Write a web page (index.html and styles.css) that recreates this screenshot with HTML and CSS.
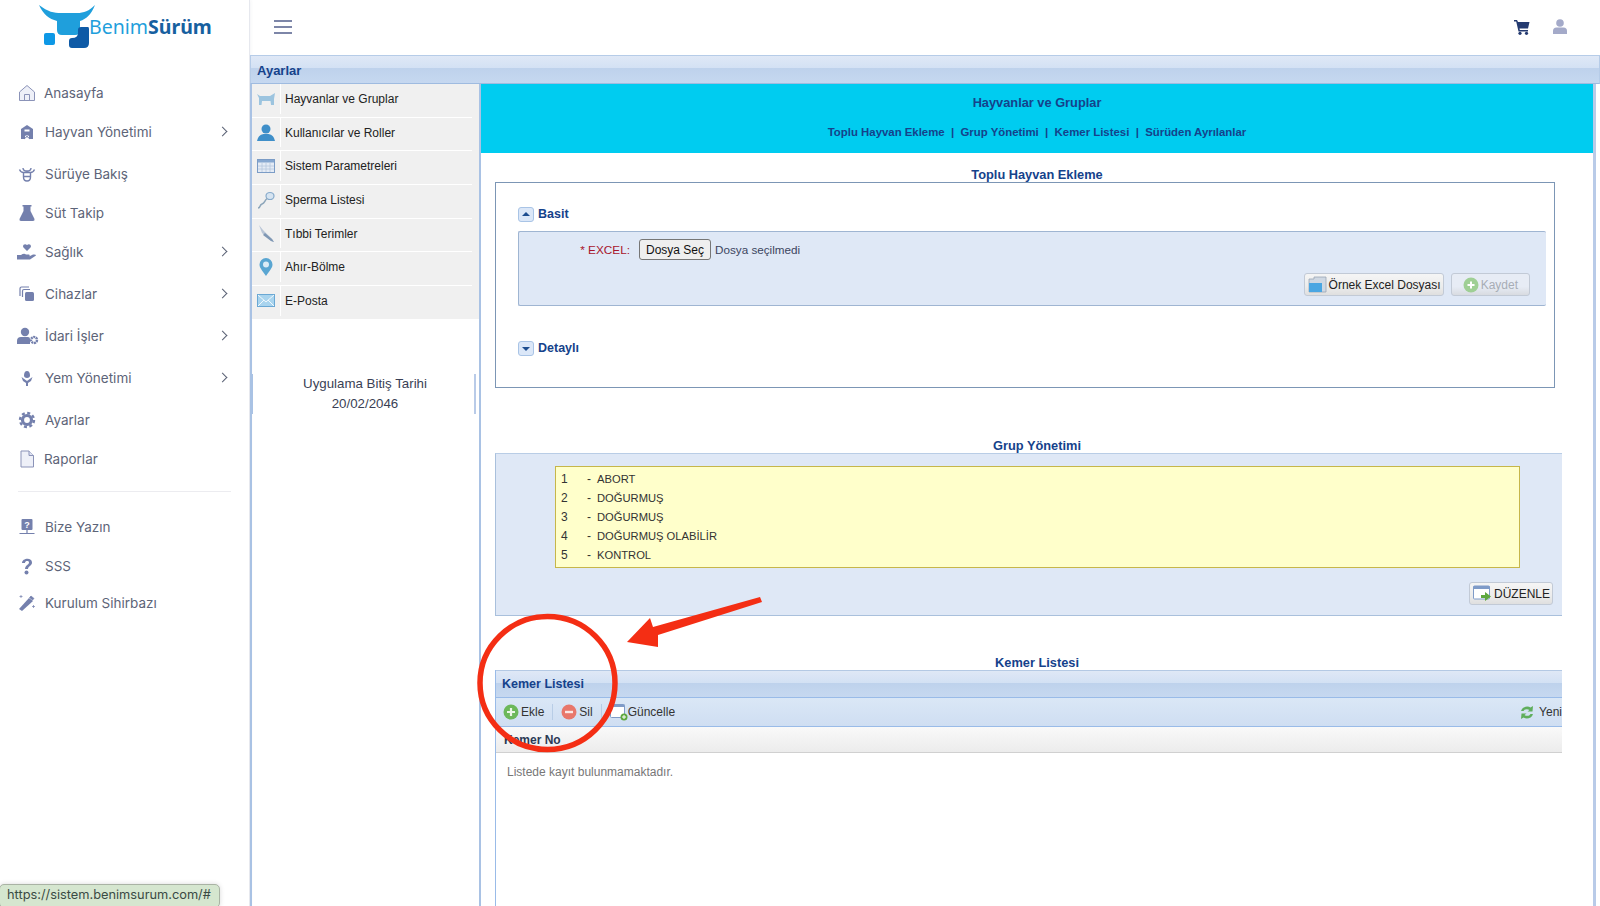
FILE: index.html
```html
<!DOCTYPE html>
<html lang="tr">
<head>
<meta charset="utf-8">
<title>BenimSürüm</title>
<link rel="stylesheet" href="styles.css">
</head>
<body>
<div class="app">
  <aside class="sidebar">
    <div class="logo">
      <svg class="logo-mark" width="60" height="50" viewBox="0 0 60 50">
        <path d="M0 5 C9 12 15 13 22 13 L38 13 C45 13 50 11 56 5 C52 15 47 19 41 21 L41 30 Q41 35 36 35 L23 35 Q18 35 18 30 L18 21 C10 19 4 14 0 5Z" fill="#1f9fdc"/>
        <rect x="5" y="33" width="11" height="12" rx="2" fill="#0d98e6"/>
        <path d="M30 41 Q30 38 33 38 Q39 38 39 33 L39 30 Q39 27 42 27 L49 27 Q50 27 50 29 L50 43 Q50 48 45 48 L33 48 Q30 48 30 45Z" fill="#0e5aa6"/>
      </svg>
      <span class="logo-text"><span class="logo-light">Benim</span><span class="logo-bold">Sürüm</span></span>
    </div>
    <nav class="nav">
      <a class="nav-item"><svg class="ic" viewBox="0 0 18 18"><path d="M1.5 8 9 1.5 16.500 8V16.500H1.500Z M6.500 16.500V10.500H11.500V16.500" fill="#eef0f8" stroke="#8b93b8" stroke-width="1"/></svg><span class="tight">Anasayfa</span></a>
      <a class="nav-item"><svg class="ic" viewBox="0 0 18 18"><path d="M3 16V6L9 2 15 6V16H11V12H7V16Z M6.500 6.500H11.500V8.500H6.500Z" fill="#7480ad" fill-rule="evenodd"/><path d="M6 16 12 11M12 16 6 11" stroke="#7480ad"/></svg><span>Hayvan Yönetimi</span><i class="chev"></i></a>
      <a class="nav-item wide"><svg class="ic" viewBox="0 0 18 18"><path d="M1.500 4.500C2.500 7 4 7.500 5.500 7.500H12.500C14 7.500 15.500 7 16.500 4.500M5 3C5 5 6 6 9 6S13 5 13 3M5.500 7.500V12C5.500 14.500 7 16 9 16S12.500 14.500 12.500 12V7.500M6 11.500H12" fill="none" stroke="#7480ad" stroke-width="1.400"/></svg><span>Sürüye Bakış</span></a>
      <a class="nav-item"><svg class="ic" viewBox="0 0 18 18"><path d="M4.500 1H13.500V2.500H12.500V7L16.500 15Q17 17 15 17H3Q1 17 1.500 15L5.500 7V2.500H4.500Z" fill="#7480ad"/></svg><span>Süt Takip</span></a>
      <a class="nav-item"><svg class="ic ic-big" viewBox="0 0 20 18"><path d="M10 8 6.500 4.500C5 2.500 7.500 0 10 2 12.500 0 15 2.500 13.500 4.500Z M0 12H4Q7 10 9 11.500H12Q13.500 12.500 12 13.500H8.500H12L16 11.500Q19 11 19 12.500L13 16.500H0Z" fill="#7480ad"/></svg><span>Sağlık</span><i class="chev"></i></a>
      <a class="nav-item wide"><svg class="ic" viewBox="0 0 18 18"><path d="M2 11V3.500Q2 2 3.500 2H11M4.500 12V6Q4.500 4.500 6 4.500H12" fill="none" stroke="#7480ad" stroke-width="1.200"/><rect x="7" y="7" width="9" height="9" rx="1.500" fill="#7480ad"/></svg><span>Cihazlar</span><i class="chev"></i></a>
      <a class="nav-item wide"><svg class="ic ic-wide" viewBox="0 0 22 18"><circle cx="8" cy="5" r="4.200" fill="#7480ad"/><path d="M0 17V14Q0 10 4 10H11Q13 10 13 12V17Z" fill="#7480ad"/><circle cx="17" cy="13" r="3" fill="none" stroke="#7480ad" stroke-width="2.400" stroke-dasharray="2 .6"/></svg><span>İdari İşler</span><i class="chev"></i></a>
      <a class="nav-item wide"><svg class="ic" viewBox="0 0 18 18"><path d="M9 2C11 2 12 4 12 6.500 12 8 11 9 9 9S6 8 6 6.500C6 4 7 2 9 2Z M3.500 8 9 12 14.500 8 13 12 10 14V17H8V14L5 12Z" fill="#7480ad"/></svg><span>Yem Yönetimi</span><i class="chev"></i></a>
      <a class="nav-item wide"><svg class="ic" viewBox="0 0 18 18"><circle cx="9" cy="9" r="4.500" fill="none" stroke="#7480ad" stroke-width="3.200"/><circle cx="9" cy="9" r="7" fill="none" stroke="#7480ad" stroke-width="2.400" stroke-dasharray="3 2.500"/></svg><span>Ayarlar</span></a>
      <a class="nav-item"><svg class="ic" viewBox="0 0 18 18"><path d="M3 1H11L15.500 5.500V17H3Z" fill="#eef0f8" stroke="#8b93b8"/><path d="M11 1V5.500H15.500" fill="#dfe3f2" stroke="#8b93b8"/></svg><span class="tight">Raporlar</span></a>
      <div class="nav-divider"></div>
      <a class="nav-item"><svg class="ic" viewBox="0 0 18 18"><rect x="3.500" y="1" width="11" height="11" rx="1" fill="#7480ad"/><text x="9" y="10" class="ic-q">?</text><path d="M9 12V15M1.500 15.500H16.500" stroke="#7480ad" stroke-width="1.200"/></svg><span>Bize Yazın</span></a>
      <a class="nav-item"><svg class="ic" viewBox="0 0 18 18"><path d="M4 6C4 1 14 0 14 5.500 14 9 10 9 10 12H7C7 8 11 8 11 5.500 11 3.500 7 3.500 7 6Z" fill="#7480ad"/><circle cx="8.500" cy="15.500" r="2" fill="#7480ad"/></svg><span>SSS</span></a>
      <a class="nav-item short"><svg class="ic" viewBox="0 0 18 18"><path d="M1 15 11 4 15 7 4 17Z" fill="#7480ad"/><path d="M13 2 16 4.500 14.500 6 11.500 3.500Z M3 1V4M1.500 2.500H4.500M15.500 11V14M14 12.500H17" fill="#7480ad" stroke="#7480ad" stroke-width=".7"/></svg><span>Kurulum Sihirbazı</span></a>
    </nav>
  </aside>

  <main class="main">
    <header class="topbar">
      <div class="burger"><b></b><b></b><b></b></div>
      <div class="top-actions">
        <svg width="16" height="16" viewBox="0 0 16 16"><path d="M0 1H3L4 3H15.500L14 9.500H5.500L5.800 11H14V12.500H4.500L2.200 2.500H0Z" fill="#243a70"/><circle cx="6" cy="14.300" r="1.600" fill="#243a70"/><circle cx="12.500" cy="14.300" r="1.600" fill="#243a70"/></svg>
        <svg width="14" height="15" viewBox="0 0 14 15"><circle cx="7" cy="4" r="3.800" fill="#a4aac9"/><path d="M0 15V12Q0 8.500 3.500 8.500H10.500Q14 8.500 14 12V15Z" fill="#a4aac9"/></svg>
      </div>
    </header>

    <div class="panel-title">Ayarlar</div>

    <div class="panel-body">
      <div class="west">
        <ul class="menu">
          <li><span class="menu-ic"><svg width="20" height="16" viewBox="0 0 20 16"><path d="M1 3 4 5H14L19 2 18 8V14H15L14.500 10H6L5.500 14H3V7Z" fill="#9cc4df"/></svg></span>Hayvanlar ve Gruplar</li>
          <li><span class="menu-ic"><svg width="20" height="18" viewBox="0 0 20 18"><circle cx="10" cy="5" r="4.500" fill="#3f8fc9"/><path d="M1 17Q2 11 7.500 10H12.500Q18 11 19 17Z" fill="#3f8fc9"/></svg></span>Kullanıcılar ve Roller</li>
          <li><span class="menu-ic"><svg width="18" height="14" viewBox="0 0 18 14"><rect x=".5" y=".5" width="17" height="13" fill="#e4ebf5" stroke="#7b9cc6"/><rect x="1" y="1" width="16" height="2.500" fill="#86a7d0"/><path d="M5 4V13M9 4V13M13 4V13M1 7H17M1 10H17" stroke="#b5c6dd" stroke-width=".8"/></svg></span>Sistem Parametreleri</li>
          <li><span class="menu-ic"><svg width="20" height="20" viewBox="0 0 20 20"><ellipse cx="14" cy="6" rx="4" ry="3.500" fill="#d6e4f1" stroke="#86aacb" stroke-width="1.200"/><path d="M11 8.500C8 11 9 13 6 14S5 18 2 18" fill="none" stroke="#8da6ba" stroke-width="1.500"/></svg></span>Sperma Listesi</li>
          <li><span class="menu-ic"><svg width="20" height="20" viewBox="0 0 20 20"><path d="M3 1 7 6 16 15 18 18 15 17 6 9Z" fill="#b9c5d6"/><path d="M9 9 16 15 18 18 15 17 7 11Z" fill="#7f97b4"/></svg></span>Tıbbi Terimler</li>
          <li><span class="menu-ic"><svg width="16" height="20" viewBox="0 0 16 20"><path d="M8 19C4 13 1.500 11 1.500 7.500A6.500 6.500 0 0 1 14.500 7.500C14.500 11 12 13 8 19Z" fill="#5aa6d2"/><circle cx="8" cy="7.500" r="3" fill="#dcecf6"/></svg></span>Ahır-Bölme</li>
          <li><span class="menu-ic"><svg width="18" height="13" viewBox="0 0 18 13"><rect x=".5" y=".5" width="17" height="12" fill="#a9d4ee" stroke="#6aa8d4"/><path d="M1 1 9 8 17 1M1 12 7 6M17 12 11 6" fill="none" stroke="#f2f9fd"/></svg></span>E-Posta</li>
        </ul>
        <div class="expiry">
          <div>Uygulama Bitiş Tarihi</div>
          <div>20/02/2046</div>
        </div>
      </div>

      <div class="center">
        <div class="hero">
          <h2>Hayvanlar ve Gruplar</h2>
          <p>Toplu Hayvan Ekleme &nbsp;|&nbsp; Grup Yönetimi &nbsp;|&nbsp; Kemer Listesi &nbsp;|&nbsp; Sürüden Ayrılanlar</p>
        </div>

        <div class="content">
          <h3 class="sec-title sec-first">Toplu Hayvan Ekleme</h3>
          <section class="box">
            <div class="acc-head"><i class="tool up"></i>Basit</div>
            <div class="form-panel">
              <div class="field">
                <label>* EXCEL:</label>
                <span class="file-btn">Dosya Seç</span>
                <span class="file-name">Dosya seçilmedi</span>
              </div>
              <div class="form-actions">
                <span class="btn"><svg width="19" height="17" viewBox="0 0 19 17"><path d="M1 3V16H18V1H6V3Z" fill="#cfd8e3" stroke="#9aa6b5" stroke-width=".8"/><path d="M1 7H14V16H1Z" fill="#4aa6e2"/></svg>Örnek Excel Dosyası</span>
                <span class="btn off"><svg width="16" height="16" viewBox="0 0 16 16"><circle cx="8" cy="8" r="7.500" fill="#9fcf95"/><path d="M8 4.500V11.500M4.500 8H11.500" stroke="#fff" stroke-width="2"/></svg>Kaydet</span>
              </div>
            </div>
            <div class="acc-head acc-second"><i class="tool down"></i>Detaylı</div>
          </section>

          <h3 class="sec-title sec-group">Grup Yönetimi</h3>
          <section class="group-panel">
            <ul class="group-list">
              <li><span>1</span><i>-</i>ABORT</li>
              <li><span>2</span><i>-</i>DOĞURMUŞ</li>
              <li><span>3</span><i>-</i>DOĞURMUŞ</li>
              <li><span>4</span><i>-</i>DOĞURMUŞ OLABİLİR</li>
              <li><span>5</span><i>-</i>KONTROL</li>
            </ul>
            <div class="group-actions">
              <span class="btn"><svg width="19" height="17" viewBox="0 0 19 17"><rect x=".5" y="1" width="16" height="13" rx="1" fill="#fff" stroke="#7f9bc8"/><rect x=".5" y="1" width="16" height="3" fill="#7f9bc8"/><path d="M8 10H12V7L18 11.500 12 16V13H8Z" fill="#5fa83f"/></svg>DÜZENLE</span>
            </div>
          </section>

          <h3 class="sec-title sec-belt">Kemer Listesi</h3>
          <section class="grid">
            <div class="grid-title">Kemer Listesi</div>
            <div class="grid-tools">
              <span class="tl"><svg width="16" height="16" viewBox="0 0 16 16"><circle cx="8" cy="8" r="7.500" fill="#6cb85a"/><path d="M8 4V12M4 8H12" stroke="#eaf6e6" stroke-width="2.200"/></svg>Ekle</span>
              <span class="tl"><svg width="16" height="16" viewBox="0 0 16 16"><circle cx="8" cy="8" r="7.500" fill="#e8776b"/><path d="M4 8H12" stroke="#fbe8e6" stroke-width="2.400"/></svg>Sil</span>
              <span class="tl plain"><svg width="18" height="17" viewBox="0 0 18 17"><rect x=".5" y=".5" width="14" height="13" rx="1" fill="#fff" stroke="#7f9bc8"/><rect x=".5" y=".5" width="14" height="2.500" fill="#7f9bc8"/><circle cx="14" cy="13" r="3.500" fill="#5fa83f"/><path d="M14 11V15M12 13H16" stroke="#fff"/></svg>Güncelle</span>
              <span class="tl refresh"><svg width="14" height="15" viewBox="0 0 14 15"><path d="M1 6C2 1.500 8 .5 10.500 2.500L13 1 12.500 6.500H7.500L9.500 5C7.500 3.500 4.500 4 3.500 6Z M13 9C12 13.500 6 14.500 3.500 12.500L1 14 1.500 8.500H6.500L4.500 10C6.500 11.500 9.500 11 10.500 9Z" fill="#5fae5c"/></svg>Yeni</span>
            </div>
            <div class="grid-col">Kemer No</div>
            <div class="grid-empty">Listede kayıt bulunmamaktadır.</div>
          </section>
        </div>
      </div>
    </div>
  </main>
</div>

<svg class="callout" width="320" height="170" viewBox="0 0 320 170">
  <ellipse cx="73.500" cy="92" rx="67.500" ry="66.500" fill="none" stroke="#f42e14" stroke-width="5.500"/>
  <path d="M153 51 176 27 179 36 286 6 288 11 184 44 184 56Z" fill="#f42e14"/>
</svg>
<div class="status-tip">https://sistem.benimsurum.com/#</div>
</body>
</html>
```
FILE: styles.css
```css
* { box-sizing: border-box; }
html, body { margin: 0; height: 100%; overflow: hidden; background: #fff; }
body { font-family: "Liberation Sans", Arial, sans-serif; font-size: 12px; color: #333; }
ul { list-style: none; margin: 0; padding: 0; }
h2, h3, p { margin: 0; }

.app { display: flex; height: 906px; width: 1600px; }

/* Sidebar */
.sidebar { width: 250px; flex: none; border-right: 1px solid #e6e8ee; box-shadow: 1px 0 3px rgba(40, 50, 90, .05); }
.logo { height: 73px; display: flex; padding: 0 0 0 39px; }
.logo-mark { flex: none; }
.logo-text { font-family: "Noto Sans", sans-serif; font-size: 19.500px; line-height: 54px; margin-left: -10px; height: 54px; }
.logo-light { color: #1f9fdc; }
.logo-bold { color: #16609f; font-weight: 700; }

.nav-item { display: flex; align-items: center; height: 39px; padding: 0 23px 0 18px; font-family: Inter, sans-serif; font-size: 13.500px; color: #5d6478; }
.nav-item.wide { margin-top: 3px; }
.nav-item.short { height: 35px; }
.nav-item span { margin-left: 9px; }
.nav-item span.tight { margin-left: 8px; }
.ic { width: 18px; height: 18px; flex: none; }
.ic-big { width: 20px; margin-right: -1px; margin-left: -1px; }
.ic-wide { width: 22px; margin-left: -1px; margin-right: -3px; }
.ic-q { font: 700 9px "Liberation Sans", sans-serif; fill: #fff; text-anchor: middle; }
.chev { margin-left: auto; width: 7px; height: 7px; border-top: 1.500px solid #596074; border-right: 1.500px solid #596074; transform: rotate(45deg); }
.nav-divider { height: 1px; background: #ececf0; margin: 13px 18px 15px; }

/* Main */
.main { flex: 1; min-width: 0; display: flex; flex-direction: column; }
.topbar { height: 55px; flex: none; display: flex; align-items: center; justify-content: space-between; padding: 0 33px 2px 24px; }
.burger { width: 18px; display: flex; flex-direction: column; gap: 4px; }
.burger b { display: block; height: 2px; background: #7d86a8; }
.top-actions { display: flex; align-items: center; gap: 23px; }

.panel-title { height: 29px; flex: none; border: 1px solid #b6cce8; border-bottom: 1px solid #9fbbe0; font-weight: 700; font-size: 13px; color: #15428b; padding: 7px 0 0 6px; background: linear-gradient(#dfe8f6 0, #d3e1f4 45%, #bed2ec 46%, #c6d8f0 100%); }
.panel-body { flex: 1; min-height: 0; display: flex; }

.west { width: 231px; flex: none; border-left: 2px solid #a9c2e4; border-right: 2px solid #a9c2e4; display: flex; flex-direction: column; }
.menu { background: #f0f0f0; }
.menu li { height: 33.700px; padding-bottom: 3px; display: flex; align-items: center; color: #222; border-bottom: 1px solid #fff; margin-right: 7px; }
.menu li:last-child { margin-right: 0; }
.menu-ic { width: 29px; height: 100%; margin-right: 4px; display: flex; align-items: center; justify-content: center; border-right: 1px solid #fff; background: #f0f0f0; flex: none; }
.expiry { margin-top: 54px; height: 40px; margin-left: -2px; margin-right: 3px; border-left: 3px solid #a9c2e4; border-right: 2px solid #b9cbe8; text-align: center; font-size: 13.300px; line-height: 20px; color: #3a3f55; padding-left: 3px; }

.center { flex: 1; min-width: 0; margin-right: 4px; border-right: 3px solid #b9cbe8; }
.hero { height: 69px; background: #00ccf0; text-align: center; color: #15428b; font-weight: 700; padding-top: 12px; }
.hero h2 { font-size: 12.800px; line-height: 14px; }
.hero p { font-size: 11.400px; line-height: 14px; margin-top: 15px; }

.content { padding: 0 0 0 14px; width: 1082px; }
.sec-title { font-size: 12.800px; line-height: 14px; text-align: center; color: #15428b; font-weight: 700; width: 1084px; }
.sec-first { padding-top: 15px; height: 28px; margin-bottom: 1px; }
.box { width: 1060px; height: 206px; border: 1px solid #7c96b5; padding: 23px 8px 0 22px; }
.acc-head { display: flex; align-items: center; gap: 4px; height: 16px; color: #15428b; font-weight: 700; font-size: 12.500px; }
.tool { width: 16px; height: 15px; border: 1px solid #a9c4e6; border-radius: 3px; background: #dbe7f8; position: relative; }
.tool::after { content: ""; position: absolute; left: 3px; width: 0; height: 0; border-left: 4px solid transparent; border-right: 4px solid transparent; }
.tool.up::after { top: 4px; border-bottom: 4px solid #1d4d8f; }
.tool.down::after { top: 5px; border-top: 4px solid #1d4d8f; }
.form-panel { height: 75px; margin-top: 9px; background: #dfe8f6; border: 1px solid #9fb5d2; border-right: 0; border-radius: 2px; padding: 7px 16px 0 0; }
.field { display: flex; align-items: center; height: 21px; }
.field label { color: #a8152c; width: 111px; text-align: right; margin-right: 9px; font-size: 11.800px; }
.file-btn { height: 21px; width: 72px; border: 1px solid #767676; border-radius: 3px; background: #efefef; color: #111; display: flex; align-items: center; justify-content: center; }
.file-name { margin-left: 4px; color: #3b4560; font-size: 11.700px; }
.form-actions { display: flex; justify-content: flex-end; gap: 7px; margin-top: 13px; }
.btn { height: 23px; display: inline-flex; align-items: center; padding: 0 2px 0 3px; border: 1px solid #c2cad6; border-radius: 3px; background: linear-gradient(#f5f5f5 0, #ececec 60%, #dfdfdf 100%); color: #222; gap: 2px; white-space: nowrap; }
.btn.off { color: #a7adb5; padding: 0 11px; background: linear-gradient(#e7ecf5 0, #e7ecf5 60%, #d8dbe0 100%); }
.acc-second { margin-top: 34px; }

.sec-group { margin-top: 51px; height: 14px; }
.group-panel { width: 1067px; height: 163px; background: #dfe8f6; border-top: 1px solid #b9cde6; border-bottom: 1px solid #a9c0dc; border-left: 1px solid #a9c0dc; padding: 12px 0 0 59px; }
.group-list { width: 965px; height: 102px; background: #ffffcb; border: 1px solid #c6b64a; padding: 3px 0 0 5px; line-height: 19px; color: #333; font-size: 11.200px; }
.group-list li { display: flex; }
.group-list span { width: 26px; font-size: 12px; }
.group-list i { font-style: normal; width: 10px; font-size: 12px; }
.group-actions { display: flex; justify-content: flex-end; padding-right: 9px; margin-top: 14px; }

.sec-belt { margin-top: 40px; height: 14px; }
.grid { width: 1067px; height: 240px; border-left: 1px solid #99bbe8; overflow: hidden; }
.grid-title { height: 28px; border-top: 1px solid #b4c9e4; border-bottom: 1px solid #99bbe8; font-weight: 700; font-size: 12.500px; color: #15428b; padding: 6px 0 0 6px; background: linear-gradient(#dfe8f6 0, #d3e1f4 45%, #bed2ec 46%, #c6d8f0 100%); }
.grid-tools { height: 29px; display: flex; align-items: center; padding-left: 7px; border-bottom: 1px solid #99bbe8; background: linear-gradient(#dae7f6, #cfdef2); color: #333; }
.tl { display: inline-flex; align-items: center; gap: 2px; padding-right: 8px; margin-right: 8px; border-right: 1px solid #b8cde6; height: 16px; }
.tl.plain { border-right: 0; margin-right: 0; gap: 0; }
.tl.refresh { margin-left: auto; margin-right: 0; border-right: 0; gap: 5px; padding-right: 0; flex: none; }
.grid-col { height: 26px; font-weight: 700; color: #2b3a55; padding: 6px 0 0 8px; border-bottom: 1px solid #d0d0d0; background: linear-gradient(#f9f9f9, #ececec); }
.grid-empty { padding: 12px 0 0 11px; color: #777; }

/* Overlays */
.callout { position: absolute; left: 474px; top: 591px; }
.status-tip { position: absolute; left: -1px; top: 884px; height: 24px; padding: 2px 8px 0 7px; background: #d5e6cf; border: 1px solid #a9b3a4; border-radius: 5px; color: #3a4a44; font-family: Inter, sans-serif; font-size: 12.800px; box-shadow: 0 0 5px rgba(0, 0, 0, .15); white-space: nowrap; }
```
